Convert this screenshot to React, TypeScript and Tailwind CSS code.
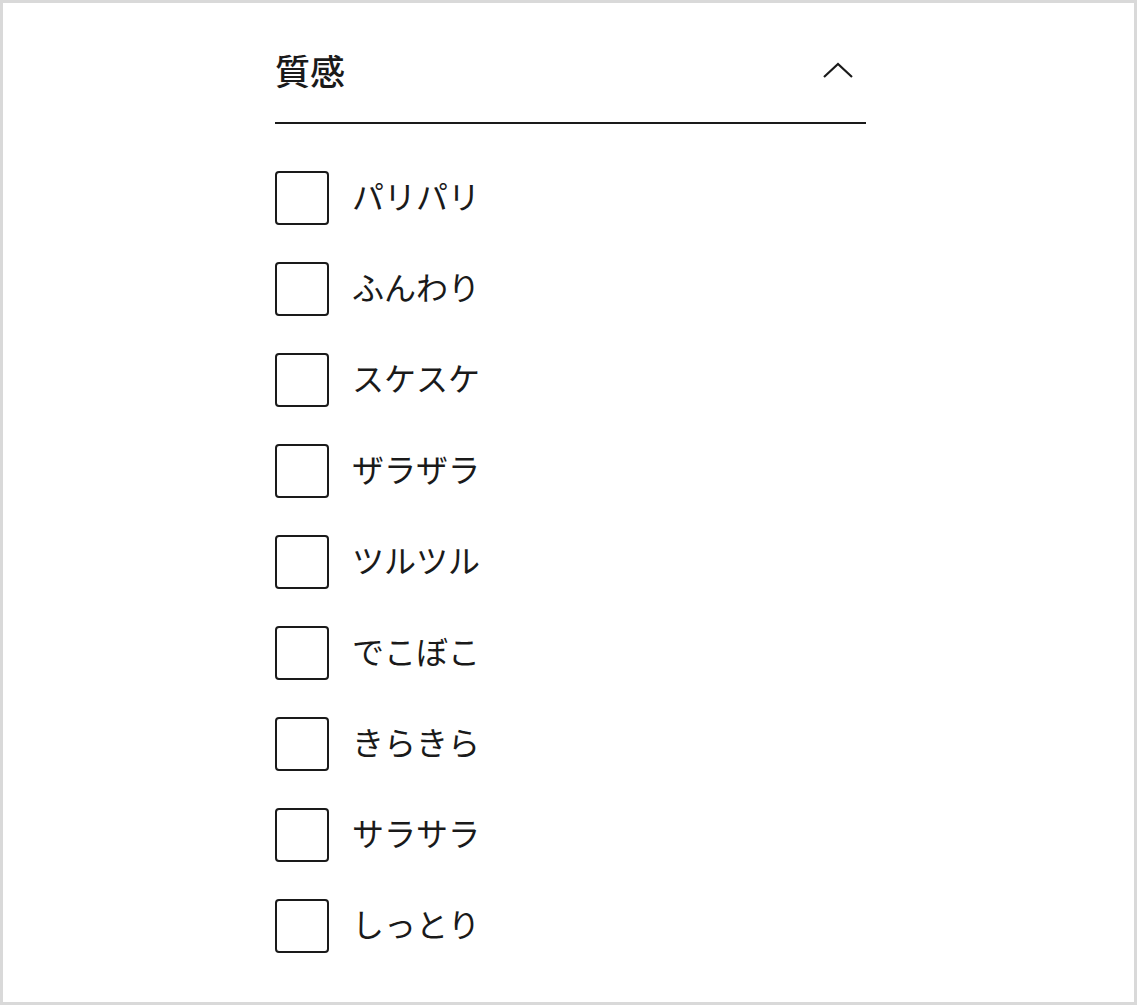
const options = [
  'パリパリ',
  'ふんわり',
  'スケスケ',
  'ザラザラ',
  'ツルツル',
  'でこぼこ',
  'きらきら',
  'サラサラ',
  'しっとり',
];

export default function App() {
  return (
    <div
      className="h-[1005px] w-full border-[3px] border-[#d9d9d9] bg-white text-[#1a1a1a]"
      style={{ fontFamily: '"Noto Sans CJK JP", "Noto Sans", sans-serif' }}
    >
      <div className="ml-[272px] w-[591px] pt-[35px]">
        {/* Header */}
        <div className="flex items-center justify-between border-b-2 border-[#1a1a1a] pb-[20px]">
          <h2 className="text-[35px] font-medium leading-[64px]">質感</h2>
          <button className="mr-[12px] flex h-[30px] w-[32px] items-center justify-center">
            <svg width="32" height="18" viewBox="0 0 32 18" fill="none">
              <polyline points="2,16 16,3 30,16" stroke="#1a1a1a" strokeWidth="2.2" />
            </svg>
          </button>
        </div>

        {/* Options */}
        <div className="mt-[47px] flex flex-col gap-[37px]">
          {options.map(label => (
            <label key={label} className="flex h-[54px] cursor-pointer items-center gap-[23px]">
              <span className="h-[54px] w-[54px] flex-shrink-0 rounded-[4px] border-2 border-[#1a1a1a]"></span>
              <span className="pb-[6px] text-[32px] leading-none">{label}</span>
            </label>
          ))}
        </div>
      </div>
    </div>
  );
}
